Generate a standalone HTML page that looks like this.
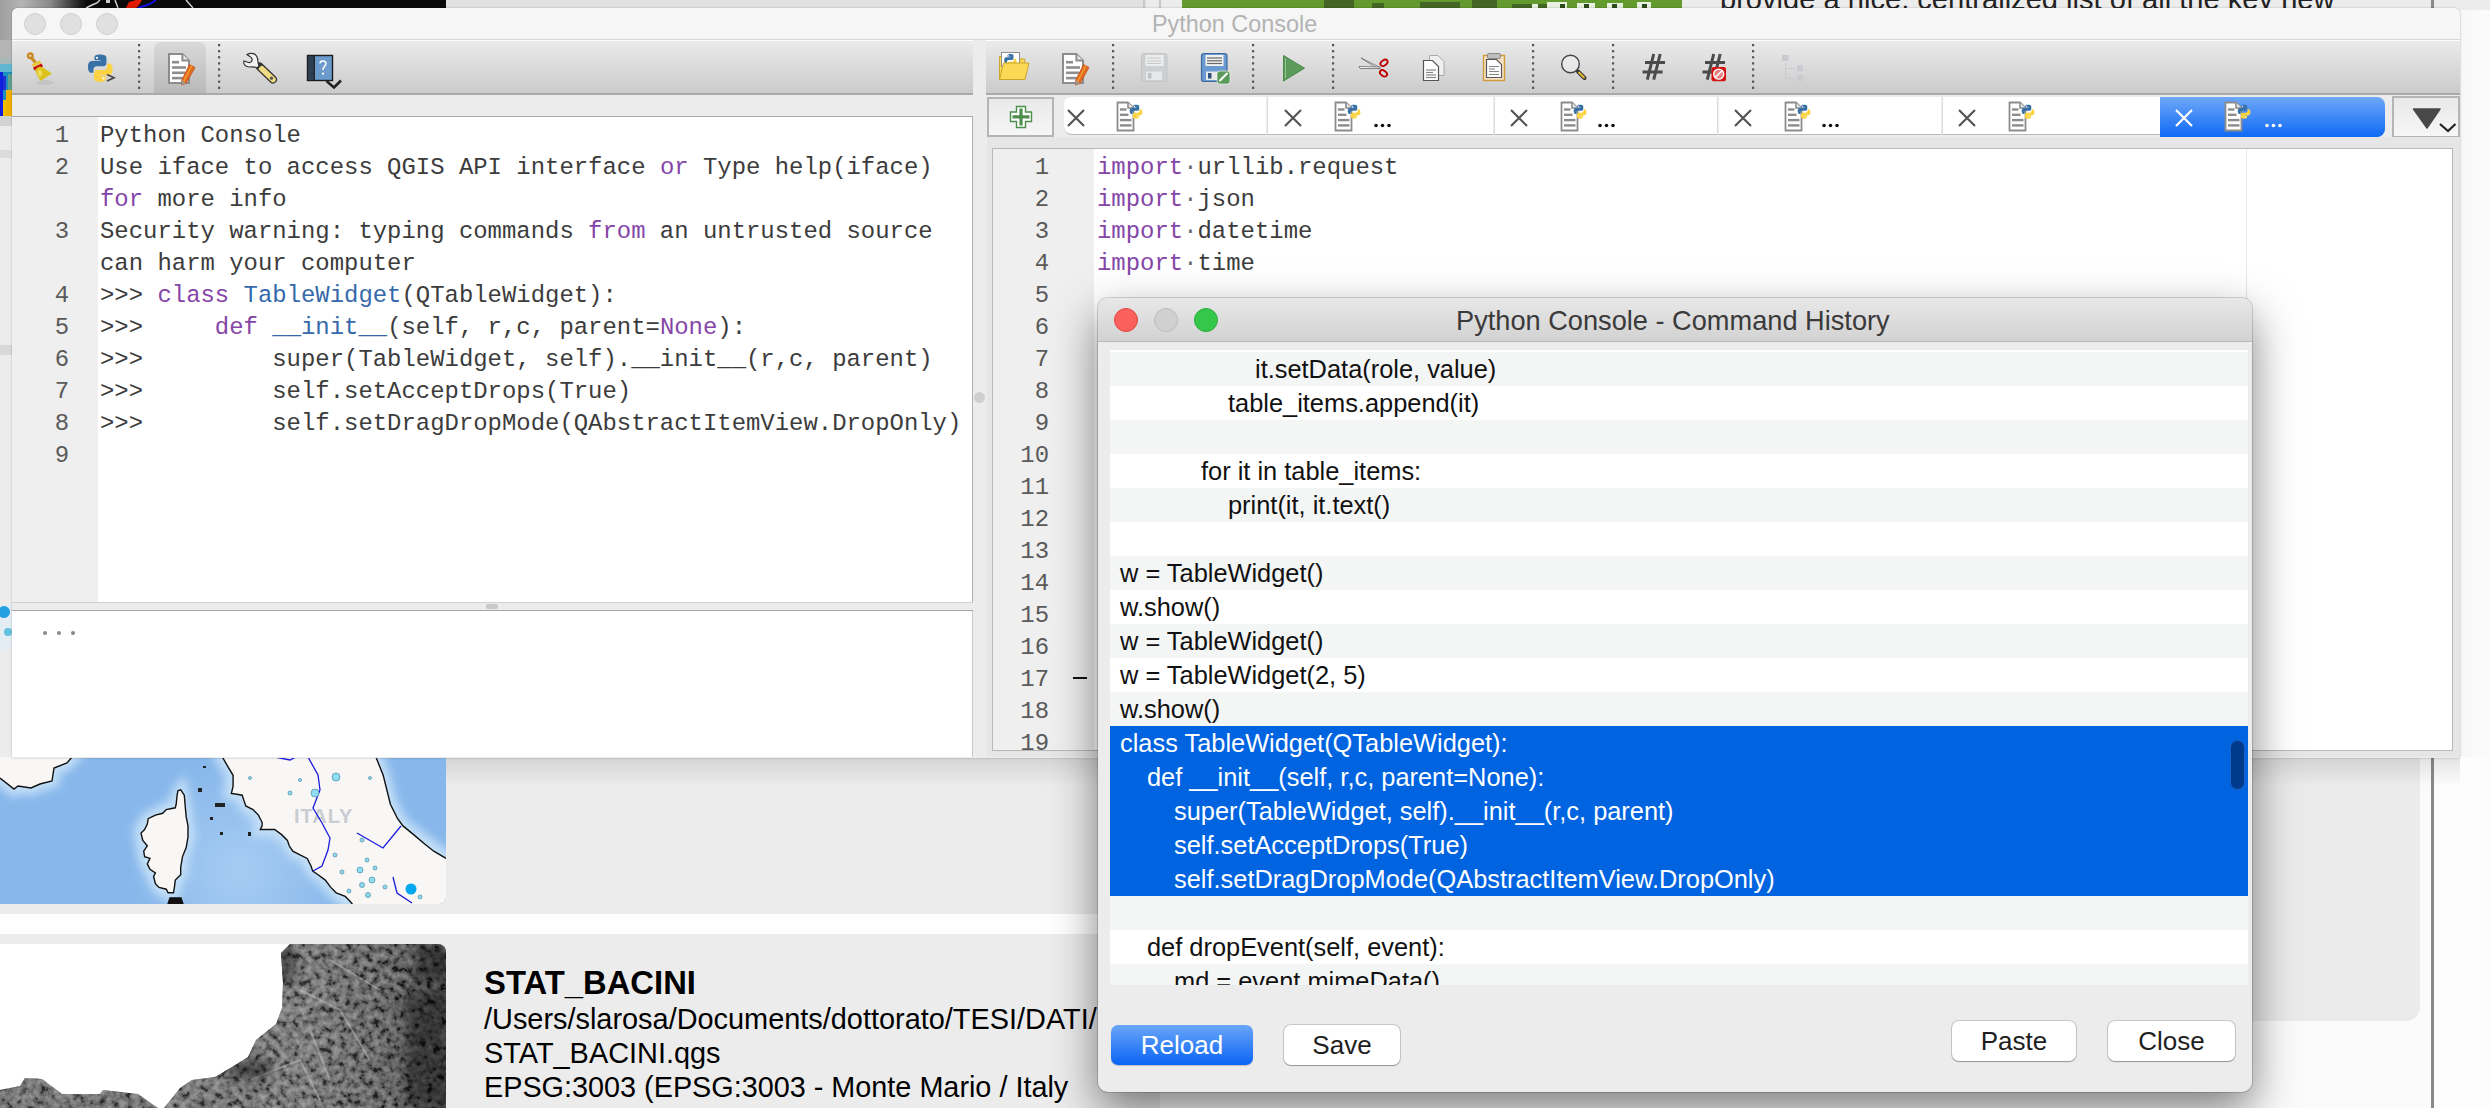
<!DOCTYPE html>
<html><head><meta charset="utf-8">
<style>
*{margin:0;padding:0;box-sizing:border-box}
html,body{width:2490px;height:1108px;overflow:hidden;background:#ececec;font-family:"Liberation Sans",sans-serif}
.a{position:absolute}
svg{display:block}
.mono{font-family:"Liberation Mono",monospace;font-size:23.93px;white-space:pre;color:#3c3c3c}
.ln{position:absolute;font-family:"Liberation Mono",monospace;font-size:23.93px;color:#5a5a5a;text-align:right;white-space:pre}
.kw{color:#8545a8}
.cl{color:#3569ab}
.sp{color:#6e6e6e}
.row{position:absolute;left:1110px;width:1138px;height:34px;font-size:25.4px;color:#111;white-space:pre;line-height:34px}
.g{background:#f4f5f5}
.w{background:#fff}
.dots{position:absolute;width:3px;border-left:3px dotted #444;}
</style></head><body>

<!-- ===== background app ===== -->
<div class="a" style="left:0;top:0;width:2490px;height:1108px;background:#ececec"></div>
<!-- top strip -->
<div class="a" style="left:0;top:0;width:90px;height:60px;background:linear-gradient(90deg,#9e9e9e 0,#b4b4b4 22px,#8a8a8a 50px,#1e1e1e 80px,#0a0a0a 90px)"></div>
<div class="a" style="left:85px;top:0;width:361px;height:10px;background:#0a0a0a;overflow:hidden">
<svg width="361" height="10" viewBox="85 0 361 10"><g stroke="#d8d8d8" stroke-width="1.4" fill="none"><path d="M86 8L92 5L97 3L100 0"/><path d="M115 0L118 8"/><path d="M186 0L193 8"/></g>
<rect x="106" y="0" width="4" height="3" fill="#ccc"/>
<polygon points="126,8 129,2 136,0 142,0 139,5 136,8" fill="#e01a00"/><path d="M138 8L150 4L156 0" stroke="#1010e0" stroke-width="2" fill="none"/></svg></div>
<div class="a" style="left:446px;top:0;width:700px;height:10px;background:#e2e2e2"></div>
<div class="a" style="left:1182px;top:0;width:500px;height:10px;background:#639a2e;overflow:hidden">
<svg width="500" height="10"><g fill="#3c5a22" opacity=".8"><rect x="142" y="0" width="30" height="10"/><rect x="190" y="3" width="12" height="7"/><rect x="238" y="2" width="40" height="8"/><rect x="290" y="0" width="25" height="10"/><rect x="330" y="4" width="40" height="6"/></g>
<g fill="#e8f0e0"><rect x="350" y="4" width="6" height="6"/><rect x="365" y="2" width="20" height="8"/><rect x="395" y="3" width="18" height="7"/><rect x="425" y="3" width="16" height="7"/><rect x="455" y="2" width="14" height="8"/></g>
<g fill="#2d4a1a"><rect x="378" y="4" width="5" height="6"/><rect x="402" y="4" width="5" height="6"/><rect x="430" y="4" width="5" height="6"/><rect x="460" y="4" width="5" height="6"/></g></svg></div>
<div class="a" style="left:1143px;top:0;width:2px;height:10px;background:#c8c8c8"></div>
<div class="a" style="left:1159px;top:0;width:2px;height:10px;background:#c8c8c8"></div>
<div class="a" style="left:2431px;top:0;width:3px;height:10px;background:#8a8a8a"></div>
<div class="a" style="left:1720px;top:-17px;font-size:29.1px;color:#222;white-space:pre">provide a nice, centralized list of all the key new</div>
<!-- left strip -->
<svg class="a" style="left:0;top:40px" width="12" height="720">
<rect x="0" y="0" width="12" height="720" fill="#ececec"/>
<rect x="0" y="0" width="12" height="20" fill="#b4b4b4"/>
<rect x="0" y="18" width="12" height="6" fill="#a8b8b8"/>
<rect x="0" y="24" width="12" height="52" fill="#1890c0"/>
<rect x="0" y="24" width="12" height="8" fill="#60b8d0"/>
<rect x="0" y="32" width="3" height="44" fill="#1020e0"/>
<rect x="3" y="36" width="3" height="14" fill="#2030d0"/>
<rect x="8" y="34" width="4" height="16" fill="#60a090"/>
<rect x="6" y="50" width="6" height="26" fill="#f0b000"/>
<rect x="3" y="60" width="3" height="16" fill="#f0c000"/>
<rect x="0" y="76" width="12" height="10" fill="#d2d2d2"/>
<rect x="0" y="110" width="12" height="8" fill="#dcdcdc"/>
<rect x="0" y="305" width="12" height="10" fill="#d8d8d8"/>
<rect x="0" y="565" width="12" height="45" fill="#e4ecf4"/>
<circle cx="4" cy="572" r="6" fill="#20a0e0"/><circle cx="8" cy="592" r="4" fill="#60c0e0"/>
</svg>

<!-- bottom-left map thumbnails -->
<div class="a" style="left:0;top:757px;width:446px;height:147px;border-bottom-right-radius:8px;overflow:hidden">
<svg width="446" height="147" viewBox="0 757 446 147">
<defs>
<radialGradient id="sea1" cx="240" cy="870" r="110" gradientUnits="userSpaceOnUse"><stop offset="0" stop-color="#a6ccf2"/><stop offset="1" stop-color="#88b7eb"/></radialGradient>
<filter id="blur2"><feGaussianBlur stdDeviation="5"/></filter>
</defs>
<rect x="0" y="757" width="446" height="147" fill="#87b6ea"/>
<rect x="0" y="757" width="446" height="147" fill="url(#sea1)"/>
<g filter="url(#blur2)" fill="#c4e0f8" stroke="#c4e0f8" stroke-width="14">
<polygon points="0,757 72,757 67,763 54,768 52,781 40,784 31,788 18,786 14,789 0,778"/>
<polygon points="181,791 184,806 188,837 182,857 181,873 175,880 173,893 168,893 159,887 150,869 145,858 141,831 148,819 166,810 176,808 178,795"/>
<polygon points="222,757 233,775 231,793 242,795 246,806 257,813 262,822 260,830 275,830 287,840 293,851 307,858 313,871 325,880 334,891 349,904 446,904 446,858 427,844 401,824 390,804 383,777 376,757"/>
</g>
<g fill="#f8f7f5" stroke="none">
<polygon points="0,757 72,757 67,763 54,768 52,781 40,784 31,788 18,786 14,789 0,778"/>
<polygon points="178,790.7 180.7,789.8 184.3,795.2 185.2,806 186.2,816.9 188,825.9 188,836.8 186.2,847.6 182.5,856.6 180.7,867.5 180.7,874.7 175.3,880.1 174.4,887.4 173.5,892.8 168.1,892.8 166.3,889.2 159,887.4 155.4,883.7 153.6,876.5 155.4,872.9 150,869.3 147.3,863.9 150,858.4 144.6,856.6 143.7,851.2 147.3,845.8 142.8,840.4 141,833.1 144.6,829.5 147.3,824.1 148.2,818.7 155.4,815.1 162.7,813.3 166.3,809.6 175.3,807.8 176.2,804.2 177.1,795.2"/>
<polygon points="222.3,757 227.7,766.3 233.1,775.3 233.1,786.1 231.4,793.4 236.8,794.3 242.2,795.2 244,800.6 245.8,806 253,809.6 258.4,815.1 262.1,822.3 262.1,825.9 260.3,829.5 265.7,829.5 274.7,829.5 281.9,834.9 287.4,840.4 289.2,845.8 292.8,851.2 300,854.8 307.2,858.4 310.9,865.7 312.7,871.1 318.1,874.7 325.3,880.1 330.8,887.4 336.2,892.8 345.2,896.4 348.8,900 352.4,904 446,904 446,858.4 433.8,851.2 424.7,844 413.9,834.9 403,825.9 397.6,818.7 390.4,804.2 383.2,775.3 375.9,757"/>
</g>
<g fill="none" stroke="#111" stroke-width="1.4" stroke-linejoin="miter">
<polyline points="72,757 67,763 54,768 52,781 40,784 31,788 18,786 14,789 0,778"/>
<polygon points="178,790.7 180.7,789.8 184.3,795.2 185.2,806 186.2,816.9 188,825.9 188,836.8 186.2,847.6 182.5,856.6 180.7,867.5 180.7,874.7 175.3,880.1 174.4,887.4 173.5,892.8 168.1,892.8 166.3,889.2 159,887.4 155.4,883.7 153.6,876.5 155.4,872.9 150,869.3 147.3,863.9 150,858.4 144.6,856.6 143.7,851.2 147.3,845.8 142.8,840.4 141,833.1 144.6,829.5 147.3,824.1 148.2,818.7 155.4,815.1 162.7,813.3 166.3,809.6 175.3,807.8 176.2,804.2 177.1,795.2"/>
<polyline points="222.3,757 227.7,766.3 233.1,775.3 233.1,786.1 231.4,793.4 236.8,794.3 242.2,795.2 244,800.6 245.8,806 253,809.6 258.4,815.1 262.1,822.3 262.1,825.9 260.3,829.5 265.7,829.5 274.7,829.5 281.9,834.9 287.4,840.4 289.2,845.8 292.8,851.2 300,854.8 307.2,858.4 310.9,865.7 312.7,871.1 318.1,874.7 325.3,880.1 330.8,887.4 336.2,892.8 345.2,896.4 348.8,900 352.4,904"/>
<polyline points="446,858.4 433.8,851.2 424.7,844 413.9,834.9 403,825.9 397.6,818.7 390.4,804.2 383.2,775.3 375.9,757"/>
<polygon points="170,898 181,898 183,904 168,904" fill="#111"/>
</g>
<text x="294" y="823" font-family="Liberation Sans" font-weight="bold" font-size="20" fill="#c9ccd0" letter-spacing="1">ITALY</text>
<g fill="none" stroke="#1a1ae0" stroke-width="1.3">
<polyline points="308,757 318,775 320,790 313,808 322,823 330,838 328,850 322,866 313,871"/>
<polyline points="357,833 383,848 401,826"/>
<polyline points="393,877 397,893 412,903"/>
<polyline points="275,757 290,760 296,757"/>
</g>
<g fill="#8fdcf5" stroke="#3a7a90" stroke-width=".6">
<circle cx="336" cy="777" r="4"/><circle cx="315" cy="793" r="4"/><circle cx="370" cy="778" r="1.5"/>
<circle cx="362" cy="840" r="2"/><circle cx="335" cy="855" r="2"/><circle cx="349" cy="891" r="2"/>
<circle cx="362" cy="885" r="2.5"/><circle cx="372" cy="880" r="3"/><circle cx="360" cy="870" r="3"/>
<circle cx="375" cy="868" r="2"/><circle cx="385" cy="887" r="2"/><circle cx="420" cy="897" r="2"/>
<circle cx="300" cy="780" r="1.5"/><circle cx="290" cy="793" r="2"/><circle cx="367" cy="860" r="2"/>
<circle cx="250" cy="778" r="1.5"/><circle cx="368" cy="895" r="2.5"/><circle cx="342" cy="872" r="2"/>
</g>
<circle cx="411" cy="889" r="5.5" fill="#00a8ee"/>
<g fill="#222"><rect x="198" y="788" width="4" height="4"/><rect x="210" y="817" width="3" height="3"/><rect x="220" y="832" width="3" height="3"/><rect x="248" y="832" width="3" height="4"/><rect x="203" y="766" width="3" height="2"/><rect x="215" y="803" width="10" height="4"/></g>
</svg></div>
<div class="a" style="left:0;top:914px;width:1160px;height:20px;background:#fff"></div>
<div class="a" style="left:0;top:944px;width:446px;height:164px;background:#fff;border-top-right-radius:8px;overflow:hidden">
<svg width="446" height="164" viewBox="0 944 446 164">
<defs>
<linearGradient id="dem" x1="160" y1="0" x2="446" y2="0" gradientUnits="userSpaceOnUse"><stop offset="0" stop-color="#505050"/><stop offset=".5" stop-color="#5a5a5a"/><stop offset=".78" stop-color="#363636"/><stop offset="1" stop-color="#141414"/></linearGradient>
<filter id="noise" x="0" y="0" width="100%" height="100%"><feTurbulence type="fractalNoise" baseFrequency="0.15" numOctaves="3" seed="7"/><feColorMatrix type="matrix" values="1.7 0 0 0 -0.48  1.7 0 0 0 -0.48  1.7 0 0 0 -0.48  0 0 0 0 0.45"/></filter>
<clipPath id="demclip"><polygon points="290,944 446,944 446,1108 164,1108 180,1088 192,1080 215,1077 232,1067 248,1057 256,1040 276,1024 282,1008 283,983 281,953"/><polygon points="0,1090 20,1086 25,1078 42,1079 62,1094 100,1094 103,1090 138,1094 152,1104 158,1108 0,1108"/></clipPath>
</defs>
<g clip-path="url(#demclip)">
<rect x="0" y="944" width="446" height="164" fill="url(#dem)"/>
<rect x="0" y="944" width="446" height="164" fill="#fff" filter="url(#noise)"/>
<g stroke="#bdbdbd" stroke-width="2" fill="none" opacity=".5"><path d="M300 990 L340 1010 L370 1060"/><path d="M310 1030 L330 1080"/><path d="M250 1080 L300 1060 L320 1100"/><path d="M330 960 L380 990"/></g>
<g fill="#111" opacity=".45" filter="url(#blur2)"><rect x="405" y="990" width="46" height="118"/><rect x="275" y="944" width="20" height="40"/><rect x="415" y="944" width="36" height="40"/><rect x="230" y="1060" width="40" height="20"/></g>
</g>
</svg></div>
<div class="a" style="left:484px;top:964px;font-size:32.8px;font-weight:bold;color:#000;white-space:pre">STAT_BACINI</div>
<div class="a" style="left:484px;top:1003px;font-size:28.9px;color:#000;white-space:pre">/Users/slarosa/Documents/dottorato/TESI/DATI/</div>
<div class="a" style="left:484px;top:1037px;font-size:28.9px;color:#000;white-space:pre">STAT_BACINI.qgs</div>
<div class="a" style="left:484px;top:1071px;font-size:28.8px;color:#000;white-space:pre">EPSG:3003 (EPSG:3003 - Monte Mario / Italy</div>

<!-- right side bg -->
<div class="a" style="left:2446px;top:10px;width:44px;height:770px;background:linear-gradient(90deg,#e0e0e0,#f8f8f8 40%,#fcfcfc)"></div>
<div class="a" style="left:1160px;top:757px;width:1330px;height:351px;background:#fbfbfb"></div>
<div class="a" style="left:1160px;top:757px;width:1260px;height:264px;background:#ebebeb;border-bottom-right-radius:14px"></div>
<div class="a" style="left:2431px;top:757px;width:3px;height:351px;background:#8a8a8a"></div>
<div class="a" style="left:2434px;top:757px;width:56px;height:351px;background:#fdfdfd"></div>

<!-- ===== main window ===== -->
<div class="a" style="left:446px;top:757px;width:2014px;height:30px;background:linear-gradient(180deg,rgba(0,0,0,.10),rgba(0,0,0,0))"></div>
<div class="a" id="win" style="left:12px;top:8px;width:2448px;height:750px;background:#ececec;border-radius:6px 6px 0 0;box-shadow:0 0 2px rgba(0,0,0,.3)">
</div>
<!-- title bar -->
<div class="a" style="left:12px;top:8px;width:2448px;height:32px;background:#f6f6f6;border-radius:6px 6px 0 0;border-bottom:1px solid #d6d6d6"></div>
<div class="a" style="left:24px;top:13px;width:22px;height:22px;border-radius:50%;background:#e0e0e0;border:1px solid #d0d0d0"></div>
<div class="a" style="left:60px;top:13px;width:22px;height:22px;border-radius:50%;background:#e0e0e0;border:1px solid #d0d0d0"></div>
<div class="a" style="left:96px;top:13px;width:22px;height:22px;border-radius:50%;background:#e0e0e0;border:1px solid #d0d0d0"></div>
<div class="a" style="left:1152px;top:11px;font-size:23.4px;color:#b3b3b3;white-space:pre">Python Console</div>

<!-- left toolbar -->
<div class="a" style="left:12px;top:40px;width:961px;height:55px;background:linear-gradient(180deg,#ebebeb,#cbcbcb);border-bottom:2px solid #a9a9a9;box-shadow:inset 0 1px 0 #fff"></div>
<div class="a" style="left:154px;top:42px;width:52px;height:51px;background:linear-gradient(180deg,#d9d9d9,#b9b9b9);border-radius:7px 7px 0 0"></div>

<!-- right toolbar -->
<div class="a" style="left:986px;top:40px;width:1474px;height:55px;background:linear-gradient(180deg,#ebebeb,#cbcbcb);border-bottom:2px solid #a9a9a9;box-shadow:inset 0 1px 0 #fff"></div>



<!-- left code area -->
<div class="a" style="left:12px;top:116px;width:961px;height:487px;background:#fff;border-top:1px solid #a8a8a8;border-right:1px solid #b0b0b0"></div>
<div class="a" style="left:12px;top:117px;width:86px;height:486px;background:#efefef"></div>
<!-- splitter -->
<div class="a" style="left:12px;top:602px;width:961px;height:9px;background:#ececec;border-top:1px solid #cfcfcf;border-bottom:1px solid #a8a8a8"></div>
<div class="a" style="left:486px;top:604px;width:12px;height:5px;border-radius:2px;background:#c8c8c8"></div>
<!-- input area -->
<div class="a" style="left:12px;top:611px;width:961px;height:146px;background:#fff;border-right:1px solid #c8c8c8"></div>
<div class="a" style="left:43px;top:631px;width:4px;height:4px;border-radius:50%;background:#8a8a8a"></div><div class="a" style="left:57px;top:631px;width:4px;height:4px;border-radius:50%;background:#8a8a8a"></div><div class="a" style="left:71px;top:631px;width:4px;height:4px;border-radius:50%;background:#8a8a8a"></div>
<!-- splitter dot -->
<div class="a" style="left:974px;top:392px;width:11px;height:11px;border-radius:50%;background:#cfcfcf"></div>

<!-- left console text -->
<div class="ln" style="left:12px;top:120px;width:57px;line-height:32px">1</div>
<div class="a mono" style="left:100px;top:120px;line-height:32px">Python Console</div>
<div class="ln" style="left:12px;top:152px;width:57px;line-height:32px">2</div>
<div class="a mono" style="left:100px;top:152px;line-height:32px">Use iface to access QGIS API interface <span class="kw">or</span> Type help(iface)</div>
<div class="a mono" style="left:100px;top:184px;line-height:32px"><span class="kw">for</span> more info</div>
<div class="ln" style="left:12px;top:216px;width:57px;line-height:32px">3</div>
<div class="a mono" style="left:100px;top:216px;line-height:32px">Security warning: typing commands <span class="kw">from</span> an untrusted source</div>
<div class="a mono" style="left:100px;top:248px;line-height:32px">can harm your computer</div>
<div class="ln" style="left:12px;top:280px;width:57px;line-height:32px">4</div>
<div class="a mono" style="left:100px;top:280px;line-height:32px">&gt;&gt;&gt; <span class="kw">class</span> <span class="cl">TableWidget</span>(QTableWidget):</div>
<div class="ln" style="left:12px;top:312px;width:57px;line-height:32px">5</div>
<div class="a mono" style="left:100px;top:312px;line-height:32px">&gt;&gt;&gt;     <span class="kw">def</span> <span class="cl">__init__</span>(self, r,c, parent=<span class="kw">None</span>):</div>
<div class="ln" style="left:12px;top:344px;width:57px;line-height:32px">6</div>
<div class="a mono" style="left:100px;top:344px;line-height:32px">&gt;&gt;&gt;         super(TableWidget, self).__init__(r,c, parent)</div>
<div class="ln" style="left:12px;top:376px;width:57px;line-height:32px">7</div>
<div class="a mono" style="left:100px;top:376px;line-height:32px">&gt;&gt;&gt;         self.setAcceptDrops(True)</div>
<div class="ln" style="left:12px;top:408px;width:57px;line-height:32px">8</div>
<div class="a mono" style="left:100px;top:408px;line-height:32px">&gt;&gt;&gt;         self.setDragDropMode(QAbstractItemView.DropOnly)</div>
<div class="ln" style="left:12px;top:440px;width:57px;line-height:32px">9</div>

<!-- right tab bar -->
<div class="a" style="left:987px;top:97px;width:67px;height:40px;background:linear-gradient(180deg,#e9e9e9,#f6f6f6);border:2px solid #b5b5b5"></div>
<div class="a" style="left:1064px;top:97px;width:1096px;height:38px;background:#fff;border-radius:7px 0 0 8px;border-bottom:1px solid #b8b8b8"></div>
<div class="a" style="left:2160px;top:97px;width:225px;height:40px;background:linear-gradient(180deg,#6ea8f8,#0f69f5);border-radius:0 8px 8px 0"></div>
<div class="a" style="left:2392px;top:96px;width:68px;height:42px;background:linear-gradient(180deg,#e9e9e9,#f6f6f6);border:2px solid #b5b5b5"></div>

<!-- right editor -->
<div class="a" style="left:987px;top:137px;width:1473px;height:620px;background:#e6e6e6"></div>
<div class="a" style="left:992px;top:148px;width:1461px;height:603px;background:#fff;border:1px solid #b8b8b8"></div>
<div class="a" style="left:993px;top:149px;width:101px;height:601px;background:#efefef"></div>
<div class="a" style="left:2246px;top:149px;width:1px;height:601px;background:#e6e6e6"></div>

<!-- right editor text -->
<div class="ln" style="left:993px;top:152px;width:56px;line-height:32px">1</div>
<div class="ln" style="left:993px;top:184px;width:56px;line-height:32px">2</div>
<div class="ln" style="left:993px;top:216px;width:56px;line-height:32px">3</div>
<div class="ln" style="left:993px;top:248px;width:56px;line-height:32px">4</div>
<div class="ln" style="left:993px;top:280px;width:56px;line-height:32px">5</div>
<div class="ln" style="left:993px;top:312px;width:56px;line-height:32px">6</div>
<div class="ln" style="left:993px;top:344px;width:56px;line-height:32px">7</div>
<div class="ln" style="left:993px;top:376px;width:56px;line-height:32px">8</div>
<div class="ln" style="left:993px;top:408px;width:56px;line-height:32px">9</div>
<div class="ln" style="left:993px;top:440px;width:56px;line-height:32px">10</div>
<div class="ln" style="left:993px;top:472px;width:56px;line-height:32px">11</div>
<div class="ln" style="left:993px;top:504px;width:56px;line-height:32px">12</div>
<div class="ln" style="left:993px;top:536px;width:56px;line-height:32px">13</div>
<div class="ln" style="left:993px;top:568px;width:56px;line-height:32px">14</div>
<div class="ln" style="left:993px;top:600px;width:56px;line-height:32px">15</div>
<div class="ln" style="left:993px;top:632px;width:56px;line-height:32px">16</div>
<div class="ln" style="left:993px;top:664px;width:56px;line-height:32px">17</div>
<div class="ln" style="left:993px;top:696px;width:56px;line-height:32px">18</div>
<div class="ln" style="left:993px;top:728px;width:56px;line-height:32px">19</div>
<div class="a mono" style="left:1097px;top:152px;line-height:32px"><span class="kw">import</span><span class="sp">·</span>urllib.request</div>
<div class="a mono" style="left:1097px;top:184px;line-height:32px"><span class="kw">import</span><span class="sp">·</span>json</div>
<div class="a mono" style="left:1097px;top:216px;line-height:32px"><span class="kw">import</span><span class="sp">·</span>datetime</div>
<div class="a mono" style="left:1097px;top:248px;line-height:32px"><span class="kw">import</span><span class="sp">·</span>time</div>
<div class="a" style="left:1073px;top:677px;width:14px;height:2px;background:#111"></div>

<!-- ICONS -->
<svg class="a" style="left:0;top:0" width="2490" height="140" viewBox="0 0 2490 140">
<defs>
<g id="pylogo">
 <path d="M6.5 0C3.6 0 3.8 1.3 3.8 1.3V2.7H6.6V3.1H2.6C2.6 3.1 0.7 2.9 0.7 5.9C0.7 8.8 2.3 8.7 2.3 8.7H3.3V7.3C3.3 7.3 3.2 5.6 5 5.6H7.8C7.8 5.6 9.5 5.6 9.5 4V1.5C9.5 1.5 9.7 0 6.5 0Z" fill="#3771a6"/>
 <path d="M6.6 13C9.5 13 9.3 11.7 9.3 11.7V10.3H6.5V9.9H10.5C10.5 9.9 12.4 10.1 12.4 7.1C12.4 4.2 10.8 4.3 10.8 4.3H9.8V5.7C9.8 5.7 9.9 7.4 8.1 7.4H5.3C5.3 7.4 3.6 7.4 3.6 9V11.5C3.6 11.5 3.4 13 6.6 13Z" fill="#fbd343"/>
 <circle cx="5" cy="1.6" r=".55" fill="#fff"/><circle cx="8.1" cy="11.4" r=".55" fill="#fff"/>
</g>
<g id="docedit">
 <path d="M1 1H14.4L21 7.6V30H1Z" fill="#fff" stroke="#8c8c8c" stroke-width="2"/>
 <path d="M14.4 1V7.6H21" fill="#e8e8e8" stroke="#8c8c8c" stroke-width="2"/>
 <g stroke="#8e8e8e" stroke-width="2.6"><path d="M4 9.2H11"/><path d="M4 14.5H18"/><path d="M4 19.8H17"/><path d="M4 25.1H15"/></g>
 <path d="M21.5 11.5L27 14.5L18 30.5L13.5 32L13.8 27Z" fill="#e06a20" stroke="#c5501a" stroke-width=".8"/>
 <path d="M23.8 12.8L15.6 28.5" stroke="#f5a030" stroke-width="1.4"/>
 <path d="M13.8 27L13.5 32L18 30.5Z" fill="#9a9a9a"/>
</g>
<g id="docpy">
 <path d="M1 1H11.5L17 6.5V29H1Z" fill="#fff" stroke="#8c8c8c" stroke-width="1.8"/>
 <path d="M11.5 1V6.5H17" fill="#e8e8e8" stroke="#8c8c8c" stroke-width="1.6"/>
 <g stroke="#8c8c8c" stroke-width="2.4"><path d="M3.5 8H10"/><path d="M3.5 13.3H12"/><path d="M3.5 18.6H15"/><path d="M3.5 23.9H15"/></g>
 <use href="#pylogo" transform="translate(12.5 3.2) scale(1.08)"/>
</g>
<g id="xmark"><path d="M0 0L16 16M16 0L0 16" stroke-width="2.2"/></g>
</defs>

<!-- left toolbar: broom -->
<g>
 <ellipse cx="45" cy="82.5" rx="9" ry="2.5" fill="#000" opacity=".06"/>
 <circle cx="30.3" cy="55.8" r="2.3" fill="none" stroke="#c98a20" stroke-width="2.4"/>
 <path d="M31.5 58L35.5 62.5" stroke="#c98a20" stroke-width="3.2"/>
 <path d="M31.5 64.5L39.5 60.5L41.5 63L33.5 67Z" fill="#e6c83a"/>
 <path d="M33 67.5L41.5 63.5L43 66.5L34.5 70.5Z" fill="#c40e0e"/>
 <path d="M35.5 71C35 68 40 65.5 43 67.5L52 73.5L40.5 81L37 75Z" fill="#dcc21c"/>
 <path d="M37.5 71.5C38 69.5 40.5 69 41.5 70.5L42.5 75L39 77Z" fill="#f4e46a" opacity=".8"/>
</g>
<!-- python console -->
<g transform="translate(86.5 54.5) scale(2.1)"><use href="#pylogo"/></g>
<path d="M107 74.5L114 77.8L107 81" fill="none" stroke="#444" stroke-width="1.6"/>
<!-- doc edit (selected) -->
<use href="#docedit" transform="translate(168 53)"/>
<!-- wrench -->
<g>
 <path d="M259.5 66.5L273 79.5" stroke="#333" stroke-width="8" stroke-linecap="round"/>
 <path d="M261.5 68.5L273 79.5" stroke="#f0dc82" stroke-width="5.5" stroke-linecap="round"/>
 <path d="M258 67L261 63.8" stroke="#333" stroke-width="3"/>
 <circle cx="271.5" cy="78.2" r="1.6" fill="#555"/>
 <path d="M247 54.5C251 52 256.5 53.5 257.5 58.5C258.5 62 257.5 64 259 65.5L257 68C255 66.5 253 66.5 249.5 67C245.5 67 243 64 244 61L248.5 62.5C251 63 252.5 61 252 59C251.5 57 249.5 56.5 247 54.5Z" fill="#f2f2f2" stroke="#333" stroke-width="1.2"/>
</g>
<!-- help -->
<g>
 <rect x="307.5" y="55.5" width="25" height="25" fill="#6b9bcc" stroke="#1a1a1a" stroke-width="1.4"/>
 <rect x="308" y="56" width="6" height="24" fill="#2d3f52"/>
 <path d="M314.3 55.5V80.5" stroke="#1a1a1a" stroke-width="1.2"/>
 <path d="M320 63.5C320 60.5 326 60 326 63.5C326 66 323 66 323 70" fill="none" stroke="#fff" stroke-width="1.5"/>
 <circle cx="323" cy="73.7" r="1.1" fill="#fff"/>
 <path d="M326.5 81L334 87.5L341 80.5" fill="none" stroke="#222" stroke-width="2.6"/>
</g>

<!-- right toolbar: open folder -->
<g>
 <path d="M999.5 79.5V56.5H1005L1006 59H1024.7V79.5Z" fill="#fcd955" stroke="#c9a62e" stroke-width="1"/>
 <rect x="1001.5" y="52.5" width="18" height="14" fill="#fff" stroke="#8c8c8c" stroke-width="1"/>
 <g transform="translate(1003.5 54) scale(1.05)"><use href="#pylogo"/></g>
 <path d="M1003.5 63H1029L1025 79.5H999.5Z" fill="#fcd955" stroke="#c9a62e" stroke-width="1"/>
</g>
<use href="#docedit" transform="translate(1062 53)"/>
<!-- save disabled -->
<g>
 <rect x="1141.5" y="53.5" width="25.5" height="28" rx="2.5" fill="#cdd0d3" stroke="#c2c5c8"/>
 <rect x="1145.5" y="55" width="18" height="11" fill="#eceded"/>
 <g stroke="#c8c8c8" stroke-width="1"><path d="M1147 58H1161"/><path d="M1147 61H1161"/><path d="M1147 63.5H1161"/></g>
 <rect x="1146" y="71.5" width="16" height="8.5" fill="#e6e7e8"/>
 <rect x="1148" y="73" width="3.5" height="5.5" fill="#bfc2c5"/>
</g>
<!-- save as -->
<g>
 <rect x="1201.5" y="53.5" width="25.5" height="28" rx="2.5" fill="#6b9ad0" stroke="#3d6a9e" stroke-width="1.2"/>
 <rect x="1205.5" y="55" width="18" height="11" fill="#f2f2f2"/>
 <g stroke="#666" stroke-width="1.2"><path d="M1207 58H1222"/><path d="M1207 60.8H1222"/><path d="M1207 63.5H1222"/></g>
 <rect x="1206" y="71.5" width="14" height="8.5" fill="#eaeaea"/>
 <rect x="1208" y="73" width="3.5" height="5.5" fill="#2f5480"/>
 <rect x="1217" y="71" width="13" height="13" rx="3" fill="#5b9a5b" stroke="#fff" stroke-width=".6"/>
 <path d="M1220 80.5L1227 73.5" stroke="#fff" stroke-width="2" stroke-linecap="round"/>
</g>
<!-- run -->
<path d="M1283.5 55.5L1304.5 68.2L1283.5 81Z" fill="#5b9a5b" stroke="#4a8a4a" stroke-width="1"/>
<path d="M1285.5 58.5V78" stroke="#a6d0a6" stroke-width=".8"/>
<!-- scissors -->
<g>
 <path d="M1361 58L1380 67.5L1378.5 69Z" fill="#fff" stroke="#666" stroke-width=".8"/>
 <path d="M1359 66.5L1380 67L1380 68.5L1360 68.5Z" fill="#fff" stroke="#666" stroke-width=".8"/>
 <ellipse cx="1384" cy="62.8" rx="4" ry="2.6" transform="rotate(-35 1384 62.8)" fill="none" stroke="#c00000" stroke-width="1.8"/>
 <ellipse cx="1383.5" cy="73.3" rx="4" ry="2.6" transform="rotate(35 1383.5 73.3)" fill="none" stroke="#c00000" stroke-width="1.8"/>
</g>
<!-- copy -->
<g>
 <path d="M1429.5 55.5H1438L1444 61.5V75.5H1429.5Z" fill="#f0f0f0" stroke="#a8a8a8"/>
 <path d="M1423.5 60.5H1432.5L1438.5 66.5V80.5H1423.5Z" fill="#fff" stroke="#555" stroke-width="1.2"/>
 <g stroke="#888" stroke-width="1.2"><path d="M1426 70H1436"/><path d="M1426 72.5H1433"/><path d="M1426 75H1436"/><path d="M1426 77.5H1436"/></g>
</g>
<!-- paste -->
<g>
 <rect x="1483.5" y="55.5" width="21" height="25" fill="#f6e2c2" stroke="#d19a3a" stroke-width="1.4"/>
 <rect x="1487.5" y="53.5" width="13" height="5" rx="1" fill="#bdbdbd" stroke="#777" stroke-width=".8"/>
 <path d="M1486.5 59.5H1496.5L1501.5 64.5V77.5H1486.5Z" fill="#fff" stroke="#555" stroke-width="1.2"/>
 <g stroke="#888" stroke-width="1.1"><path d="M1489 66.5H1499"/><path d="M1489 69H1495"/><path d="M1489 71.5H1499"/><path d="M1489 74.5H1499"/></g>
</g>
<!-- magnifier -->
<g>
 <circle cx="1570.5" cy="64" r="8.8" fill="#f4f4f4" fill-opacity=".5" stroke="#444" stroke-width="1.4"/>
 <path d="M1578 71.5L1584.5 78" stroke="#333" stroke-width="4" stroke-linecap="round"/>
 <path d="M1579 72.5L1584 77.5" stroke="#f0c030" stroke-width="1.8" stroke-linecap="round"/>
</g>
<!-- hash -->
<g stroke="#4a4a4a" stroke-width="3" fill="none">
 <path d="M1653.7 54L1647.3 79.7M1660.2 54L1653.7 79.7M1645 62.5H1665M1642.5 72.1H1662.6"/>
 <path d="M1713.7 54L1707.3 79.7M1720.2 54L1713.7 79.7M1705 62.5H1725M1702.5 72.1H1722.6"/>
</g>
<rect x="1711.5" y="67" width="14.5" height="14.3" rx="2" fill="#d41212"/>
<circle cx="1718.7" cy="74.1" r="5" fill="#e88080" stroke="#fff" stroke-width="1.4"/>
<path d="M1715.5 77.3L1722 70.9" stroke="#fff" stroke-width="1.6"/>
<!-- tree disabled -->
<g fill="#c8ccd1">
 <rect x="1782" y="55" width="6.5" height="6"/><rect x="1797" y="65.3" width="6" height="6.3"/><rect x="1797" y="75" width="6" height="6"/>
</g>
<path d="M1785.5 63V78.5H1795M1785.5 68.5H1795" fill="none" stroke="#c8ccd1" stroke-width="1"/>

<!-- separators -->
<g fill="#555">
<rect x="138" y="44.0" width="2.2" height="2.2"/>
<rect x="138" y="50.1" width="2.2" height="2.2"/>
<rect x="138" y="56.2" width="2.2" height="2.2"/>
<rect x="138" y="62.3" width="2.2" height="2.2"/>
<rect x="138" y="68.4" width="2.2" height="2.2"/>
<rect x="138" y="74.5" width="2.2" height="2.2"/>
<rect x="138" y="80.6" width="2.2" height="2.2"/>
<rect x="138" y="86.7" width="2.2" height="2.2"/>
<rect x="218" y="44.0" width="2.2" height="2.2"/>
<rect x="218" y="50.1" width="2.2" height="2.2"/>
<rect x="218" y="56.2" width="2.2" height="2.2"/>
<rect x="218" y="62.3" width="2.2" height="2.2"/>
<rect x="218" y="68.4" width="2.2" height="2.2"/>
<rect x="218" y="74.5" width="2.2" height="2.2"/>
<rect x="218" y="80.6" width="2.2" height="2.2"/>
<rect x="218" y="86.7" width="2.2" height="2.2"/>
<rect x="1112" y="44.0" width="2.2" height="2.2"/>
<rect x="1112" y="50.1" width="2.2" height="2.2"/>
<rect x="1112" y="56.2" width="2.2" height="2.2"/>
<rect x="1112" y="62.3" width="2.2" height="2.2"/>
<rect x="1112" y="68.4" width="2.2" height="2.2"/>
<rect x="1112" y="74.5" width="2.2" height="2.2"/>
<rect x="1112" y="80.6" width="2.2" height="2.2"/>
<rect x="1112" y="86.7" width="2.2" height="2.2"/>
<rect x="1252" y="44.0" width="2.2" height="2.2"/>
<rect x="1252" y="50.1" width="2.2" height="2.2"/>
<rect x="1252" y="56.2" width="2.2" height="2.2"/>
<rect x="1252" y="62.3" width="2.2" height="2.2"/>
<rect x="1252" y="68.4" width="2.2" height="2.2"/>
<rect x="1252" y="74.5" width="2.2" height="2.2"/>
<rect x="1252" y="80.6" width="2.2" height="2.2"/>
<rect x="1252" y="86.7" width="2.2" height="2.2"/>
<rect x="1332" y="44.0" width="2.2" height="2.2"/>
<rect x="1332" y="50.1" width="2.2" height="2.2"/>
<rect x="1332" y="56.2" width="2.2" height="2.2"/>
<rect x="1332" y="62.3" width="2.2" height="2.2"/>
<rect x="1332" y="68.4" width="2.2" height="2.2"/>
<rect x="1332" y="74.5" width="2.2" height="2.2"/>
<rect x="1332" y="80.6" width="2.2" height="2.2"/>
<rect x="1332" y="86.7" width="2.2" height="2.2"/>
<rect x="1532" y="44.0" width="2.2" height="2.2"/>
<rect x="1532" y="50.1" width="2.2" height="2.2"/>
<rect x="1532" y="56.2" width="2.2" height="2.2"/>
<rect x="1532" y="62.3" width="2.2" height="2.2"/>
<rect x="1532" y="68.4" width="2.2" height="2.2"/>
<rect x="1532" y="74.5" width="2.2" height="2.2"/>
<rect x="1532" y="80.6" width="2.2" height="2.2"/>
<rect x="1532" y="86.7" width="2.2" height="2.2"/>
<rect x="1612" y="44.0" width="2.2" height="2.2"/>
<rect x="1612" y="50.1" width="2.2" height="2.2"/>
<rect x="1612" y="56.2" width="2.2" height="2.2"/>
<rect x="1612" y="62.3" width="2.2" height="2.2"/>
<rect x="1612" y="68.4" width="2.2" height="2.2"/>
<rect x="1612" y="74.5" width="2.2" height="2.2"/>
<rect x="1612" y="80.6" width="2.2" height="2.2"/>
<rect x="1612" y="86.7" width="2.2" height="2.2"/>
<rect x="1752" y="44.0" width="2.2" height="2.2"/>
<rect x="1752" y="50.1" width="2.2" height="2.2"/>
<rect x="1752" y="56.2" width="2.2" height="2.2"/>
<rect x="1752" y="62.3" width="2.2" height="2.2"/>
<rect x="1752" y="68.4" width="2.2" height="2.2"/>
<rect x="1752" y="74.5" width="2.2" height="2.2"/>
<rect x="1752" y="80.6" width="2.2" height="2.2"/>
<rect x="1752" y="86.7" width="2.2" height="2.2"/>
</g>

<!-- tab bar -->
<g>
 <path d="M1016.5 106.5H1025.5V112H1031.5V121.5H1025.5V127.5H1016.5V121.5H1010.5V112H1016.5Z" fill="#fff" stroke="#4d8d4d" stroke-width="1.4"/>
 <path d="M1021 108.5V125.5M1012.5 116.8H1029.5" stroke="#4d8d4d" stroke-width="3.2"/>
</g>
<g stroke="#555"><use href="#xmark" transform="translate(1068 110)"/><use href="#xmark" transform="translate(1285 110)"/><use href="#xmark" transform="translate(1511 110)"/><use href="#xmark" transform="translate(1735 110)"/><use href="#xmark" transform="translate(1959 110)"/></g>
<g stroke="#fff"><use href="#xmark" transform="translate(2176 110)"/></g>
<use href="#docpy" transform="translate(1116.5 101.5)"/>
<use href="#docpy" transform="translate(1334.5 101.5)"/>
<use href="#docpy" transform="translate(1560.5 101.5)"/>
<use href="#docpy" transform="translate(1784.5 101.5)"/>
<use href="#docpy" transform="translate(2008.5 101.5)"/>
<use href="#docpy" transform="translate(2224.5 101.5)"/>
<g fill="#111"><circle cx="1376" cy="125.5" r="1.8"/><circle cx="1382.5" cy="125.5" r="1.8"/><circle cx="1389" cy="125.5" r="1.8"/>
<circle cx="1600" cy="125.5" r="1.8"/><circle cx="1606.5" cy="125.5" r="1.8"/><circle cx="1613" cy="125.5" r="1.8"/>
<circle cx="1824" cy="125.5" r="1.8"/><circle cx="1830.5" cy="125.5" r="1.8"/><circle cx="1837" cy="125.5" r="1.8"/></g>
<g fill="#fff"><circle cx="2267" cy="125.5" r="1.8"/><circle cx="2273.5" cy="125.5" r="1.8"/><circle cx="2280" cy="125.5" r="1.8"/></g>
<g fill="#ddd"><rect x="1266.5" y="97" width="1.5" height="38"/><rect x="1493.5" y="97" width="1.5" height="38"/><rect x="1717" y="97" width="1.5" height="38"/><rect x="1941.5" y="97" width="1.5" height="38"/></g>
<path d="M2413.5 109H2440L2427 128Z" fill="#484848" stroke="#484848" stroke-width="1.5" stroke-linejoin="round"/>
<path d="M2440 124L2448 131L2455.5 124" fill="none" stroke="#222" stroke-width="2.2"/>
</svg>
<!-- ===== dialog ===== -->
<div class="a" style="left:1098px;top:298px;width:1154px;height:794px;background:#ececec;border-radius:10px;box-shadow:0 18px 45px rgba(0,0,0,.5),0 0 0 1px rgba(0,0,0,.15)"></div>
<div class="a" style="left:1098px;top:298px;width:1154px;height:44px;background:linear-gradient(180deg,#e8e8e8,#d2d2d2);border-radius:10px 10px 0 0;border-bottom:1px solid #b9b9b9"></div>
<div class="a" style="left:1114px;top:308px;width:24px;height:24px;border-radius:50%;background:#fc605c;border:1px solid #df4744"></div>
<div class="a" style="left:1154px;top:308px;width:24px;height:24px;border-radius:50%;background:#d0d0d0;border:1px solid #bdbdbd"></div>
<div class="a" style="left:1194px;top:308px;width:24px;height:24px;border-radius:50%;background:#34c84a;border:1px solid #2dac3e"></div>
<div class="a" style="left:1456px;top:305px;font-size:27.2px;color:#3a3a3a;white-space:pre">Python Console - Command History</div>

<div class="a" style="left:1110px;top:350px;width:1138px;height:635px;background:#fff;overflow:hidden">
<div class="row g" style="left:0;top:2px"><span style="position:absolute;left:145px;top:0">it.setData(role, value)</span></div>
<div class="row w" style="left:0;top:36px"><span style="position:absolute;left:118px;top:0">table_items.append(it)</span></div>
<div class="row g" style="left:0;top:70px"></div>
<div class="row w" style="left:0;top:104px"><span style="position:absolute;left:91px;top:0">for it in table_items:</span></div>
<div class="row g" style="left:0;top:138px"><span style="position:absolute;left:118px;top:0">print(it, it.text()</span></div>
<div class="row w" style="left:0;top:172px"></div>
<div class="row g" style="left:0;top:206px"><span style="position:absolute;left:10px;top:0">w = TableWidget()</span></div>
<div class="row w" style="left:0;top:240px"><span style="position:absolute;left:10px;top:0">w.show()</span></div>
<div class="row g" style="left:0;top:274px"><span style="position:absolute;left:10px;top:0">w = TableWidget()</span></div>
<div class="row w" style="left:0;top:308px"><span style="position:absolute;left:10px;top:0">w = TableWidget(2, 5)</span></div>
<div class="row g" style="left:0;top:342px"><span style="position:absolute;left:10px;top:0">w.show()</span></div>
<div class="row" style="left:0;top:376px;height:170px;background:#0064e0;color:#fff"><span style="position:absolute;left:10px;top:0px">class TableWidget(QTableWidget):</span><span style="position:absolute;left:37px;top:34px">def __init__(self, r,c, parent=None):</span><span style="position:absolute;left:64px;top:68px">super(TableWidget, self).__init__(r,c, parent)</span><span style="position:absolute;left:64px;top:102px">self.setAcceptDrops(True)</span><span style="position:absolute;left:64px;top:136px">self.setDragDropMode(QAbstractItemView.DropOnly)</span></div>
<div class="a" style="left:1120px;top:390px;width:15px;height:50px;border-radius:8px;background:#003a8c;border:1px solid #1e5fc0"></div>
<div class="row g" style="left:0;top:546px"></div>
<div class="row w" style="left:0;top:580px"><span style="position:absolute;left:37px;top:0">def dropEvent(self, event):</span></div>
<div class="row g" style="left:0;top:614px"><span style="position:absolute;left:64px;top:0">md = event.mimeData()</span></div>
</div>

<!-- buttons -->
<div class="a" style="left:1111px;top:1025px;width:142px;height:40px;border-radius:7px;background:linear-gradient(180deg,#6aa6f8,#0a64f5);box-shadow:0 1px 1px rgba(0,0,0,.2)"></div>
<div class="a" style="left:1111px;top:1025px;width:142px;height:40px;line-height:40px;text-align:center;font-size:26px;color:#fff">Reload</div>
<div class="a" style="left:1284px;top:1025px;width:116px;height:40px;border-radius:7px;background:#fff;box-shadow:0 0 0 1px rgba(0,0,0,.15),0 1px 1px rgba(0,0,0,.25)"></div>
<div class="a" style="left:1284px;top:1025px;width:116px;height:40px;line-height:40px;text-align:center;font-size:26px;color:#1e1e1e">Save</div>
<div class="a" style="left:1952px;top:1021px;width:124px;height:40px;border-radius:7px;background:#fff;box-shadow:0 0 0 1px rgba(0,0,0,.15),0 1px 1px rgba(0,0,0,.25)"></div>
<div class="a" style="left:1952px;top:1021px;width:124px;height:40px;line-height:40px;text-align:center;font-size:26px;color:#1e1e1e">Paste</div>
<div class="a" style="left:2108px;top:1021px;width:127px;height:40px;border-radius:7px;background:#fff;box-shadow:0 0 0 1px rgba(0,0,0,.15),0 1px 1px rgba(0,0,0,.25)"></div>
<div class="a" style="left:2108px;top:1021px;width:127px;height:40px;line-height:40px;text-align:center;font-size:26px;color:#1e1e1e">Close</div>


</body></html>
